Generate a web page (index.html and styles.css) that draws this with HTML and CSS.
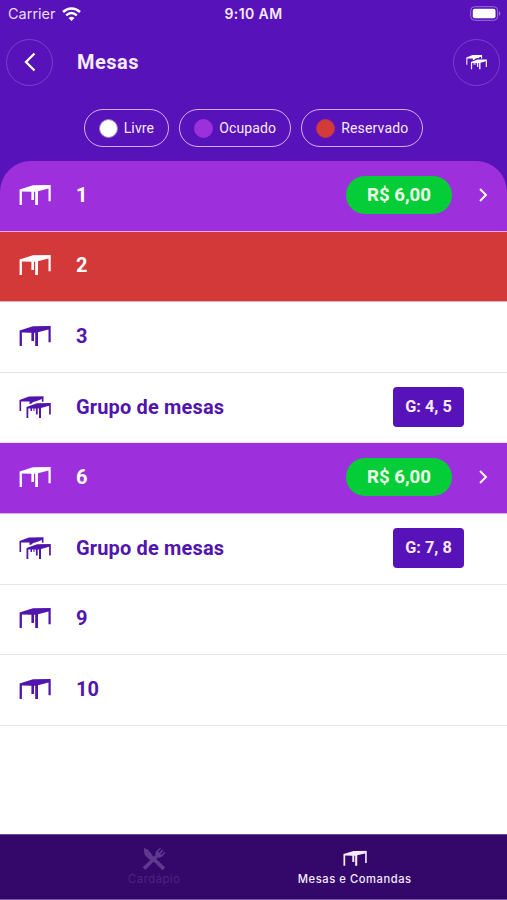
FILE: index.html
```html
<!DOCTYPE html>
<html lang="pt-BR">
<head>
<meta charset="utf-8">
<meta name="viewport" content="width=device-width">
<title>Mesas</title>
<link rel="stylesheet" href="styles.css">
</head>
<body>
<svg width="0" height="0" class="defs" aria-hidden="true">
  <symbol id="table" viewBox="0 0 32 20">
    <path fill="currentColor" d="M.6 4.5 14 .3 31.7 0V16.3H29.5V3.6L19 6.2V20H16.2V6.8H15V15H12.4V6.7L2.9 6.4V20H.6Z"/>
  </symbol>
  <symbol id="tables" viewBox="0 0 32 22">
    <path fill="currentColor" d="M.5 4 10 .4 24.5.2V5.8H22.9V3L18.5 4.8 13.5 6.2V7L10.5 8.2V5.6L2.1 5.5V15H.5Z"/>
    <path fill="currentColor" d="M7.5 11 18 7.3 31.8 7V18.5H30.1V9.7L22 12V22H20V12.4H18.7V18.5H16.9V12.4L9.3 12.6V22H7.5Z"/>
    <path fill="currentColor" d="M11.5 12H13V15H11.5ZM14.5 12H15.5V15H14.5Z"/>
  </symbol>
  <symbol id="chevron" viewBox="0 0 8 14">
    <path d="M1 1 7 7 1 13" fill="none" stroke="currentColor" stroke-width="1.9"/>
  </symbol>
</svg>
<div class="app">
  <header>
    <div class="status">
      <div class="carrier">Carrier
        <svg width="19" height="14" viewBox="0 0 19 14" fill="none" stroke="currentColor" stroke-width="2.5"><path d="M1 5C6 .2 13 .2 18 5M4.2 8.4C7.5 5.4 11.5 5.4 14.8 8.4"/><path d="M6.5 10.9Q9.5 8.5 12.5 10.9L9.5 14Z" fill="currentColor" stroke="none"/></svg>
      </div>
      <div class="time">9:10 AM</div>
      <svg class="battery" width="31" height="15" viewBox="0 0 31 15"><rect x=".7" y=".7" width="27" height="13.6" rx="4" fill="none" stroke="#9b70dc"/><rect x="2.8" y="2.8" width="22.7" height="9.4" rx="2" fill="#fff"/><path d="M29 5Q31.7 7.5 29 10Z" fill="#9b70dc"/></svg>
    </div>
    <div class="title-bar">
      <button class="round" aria-label="Voltar"><svg width="12" height="20" viewBox="0 0 12 20"><path d="M10.5 1.5 2 10 10.5 18.5" fill="none" stroke="currentColor" stroke-width="2.3"/></svg></button>
      <h1>Mesas</h1>
      <button class="round" aria-label="Agrupar"><svg width="21" height="16"><use href="#tables"/></svg></button>
    </div>
    <div class="legend">
      <span class="chip free"><i></i>Livre</span>
      <span class="chip busy"><i></i>Ocupado</span>
      <span class="chip reserved"><i></i>Reservado</span>
    </div>
  </header>
  <main>
    <div class="row busy"><svg class="icon"><use href="#table"/></svg><b>1</b><span class="price">R$ 6,00</span><svg class="chevron"><use href="#chevron"/></svg></div>
    <div class="row reserved"><svg class="icon"><use href="#table"/></svg><b>2</b></div>
    <div class="row"><svg class="icon"><use href="#table"/></svg><b>3</b></div>
    <div class="row"><svg class="icon group"><use href="#tables"/></svg><b>Grupo de mesas</b><span class="tag">G: 4, 5</span></div>
    <div class="row busy"><svg class="icon"><use href="#table"/></svg><b>6</b><span class="price">R$ 6,00</span><svg class="chevron"><use href="#chevron"/></svg></div>
    <div class="row"><svg class="icon group"><use href="#tables"/></svg><b>Grupo de mesas</b><span class="tag">G: 7, 8</span></div>
    <div class="row"><svg class="icon"><use href="#table"/></svg><b>9</b></div>
    <div class="row"><svg class="icon"><use href="#table"/></svg><b>10</b></div>
  </main>
  <nav>
    <a class="tab muted">
      <svg width="24" height="24" viewBox="0 0 24 24" fill="currentColor"><path d="M2.2 1C6 2 8.4 5 10.5 8.5L23.3 20.5 20.5 23.3 11.4 14.2 9.8 14.8 2.8 8Q1.2 4 2.2 1Z"/><path d="M.7 20.2 13.5 8.3Q12.8 5.5 15 3.5L18 .7 19 1.7 16 4.8 17 5.8 20.3 2.5 21.4 3.6 18.2 6.9 19.2 7.9 22.3 4.8 23.3 5.8 20.5 9Q18.3 11.2 15.7 10.5L3.4 23Z"/></svg>
      <span>Cardápio</span>
    </a>
    <a class="tab">
      <svg width="24" height="24" viewBox="0 0 24 24"><use href="#table" x="0" y="3.5" width="24" height="15.4"/></svg>
      <span>Mesas e Comandas</span>
    </a>
  </nav>
</div>
</body>
</html>
```

FILE: styles.css
```css
* { box-sizing: border-box; }
body { margin: 0; font-family: Roboto, sans-serif; background: #5712b9; }
.defs { position: absolute; }
.app { height: 900px; display: flex; flex-direction: column; background: #5712b9; overflow: hidden; }
header { height: 161px; flex: none; color: #f8eaff; }
.status { height: 27px; padding: 0 6px 0 8px; display: grid; grid-template-columns: 1fr auto 1fr; align-items: center; font-family: Inter, sans-serif; font-size: 14.5px; }
.carrier { display: flex; align-items: center; gap: 6px; color: #eadcf9; }
.carrier svg { color: #fff; }
.time { font-weight: 600; font-size: 14px; letter-spacing: .4px; margin-right: 2px; }
.battery { justify-self: end; }
.title-bar { height: 70px; padding: 0 7px 0 6px; display: flex; align-items: center; }
.round { width: 47px; height: 47px; padding: 0; border: 1.5px solid #7c40d0; border-radius: 50%; background: none; color: #fff; display: flex; align-items: center; justify-content: center; }
h1 { margin: 0 auto 0 24px; font-size: 20px; font-weight: 700; letter-spacing: .5px; line-height: 24px; }
.legend { padding-top: 12px; display: flex; justify-content: center; gap: 10px; }
.chip { height: 38px; padding: 0 14px; border: 1.5px solid #d7aef5; border-radius: 19px; display: flex; align-items: center; gap: 6px; font-size: 14px; letter-spacing: .15px; }
.chip i { width: 19px; height: 19px; border-radius: 50%; background: #fff; border: 1px solid #9c83c6; }
.chip.busy i { background: #9d30dd; border-color: #9d30dd; }
.chip.reserved i { background: #d33b3b; border-color: #bd3556; }
main { flex: 1; background: linear-gradient(#5712b9 60px, #fff 60px); }
.row { height: 70.6px; padding: 0 19px 2px; display: flex; align-items: center; background: #fff; border-bottom: 1px solid #e4e3e7; color: #5115ae; }
.row:first-child { border-radius: 31px 31px 0 0; }
.row.busy { background: #9d30dc; color: #fff; border-color: #e3a8dc; }
.row.reserved { background: #d33939; color: #fff; border-color: #e7b4b5; }
.icon { width: 32px; height: 20px; flex: none; }
.icon.group { height: 22px; }
.row b { margin: 0 auto 0 25px; font-size: 20px; letter-spacing: .15px; line-height: 24px; }
.price { width: 106px; height: 38px; margin-right: 26px; border-radius: 19px; background: #05cd37; display: flex; align-items: center; justify-content: center; font-size: 18.7px; font-weight: 700; color: #edffe9; }
.chevron { width: 10px; height: 14px; }
.tag { width: 71px; height: 40px; margin-right: 24px; border-radius: 4px; background: #5712b9; color: #f8e9ff; display: flex; align-items: center; justify-content: center; font-size: 16.3px; font-weight: 700; }
nav { height: 66px; flex: none; padding: 0 52px 0 54px; background: #34086b; border-top: 1px solid #6d4a96; border-bottom: 1px solid #7b5ba2; display: grid; grid-template-columns: 1fr 1fr; }
.tab { display: flex; flex-direction: column; align-items: center; padding-top: 12px; color: #f5e9ff; font-family: Inter, sans-serif; font-size: 11.2px; font-weight: 500; letter-spacing: .55px; line-height: 14px; }
.tab svg { margin-bottom: 1px; }
.muted { color: #4c247f; font-weight: 400; }
.muted svg { color: #5f3990; }
```
